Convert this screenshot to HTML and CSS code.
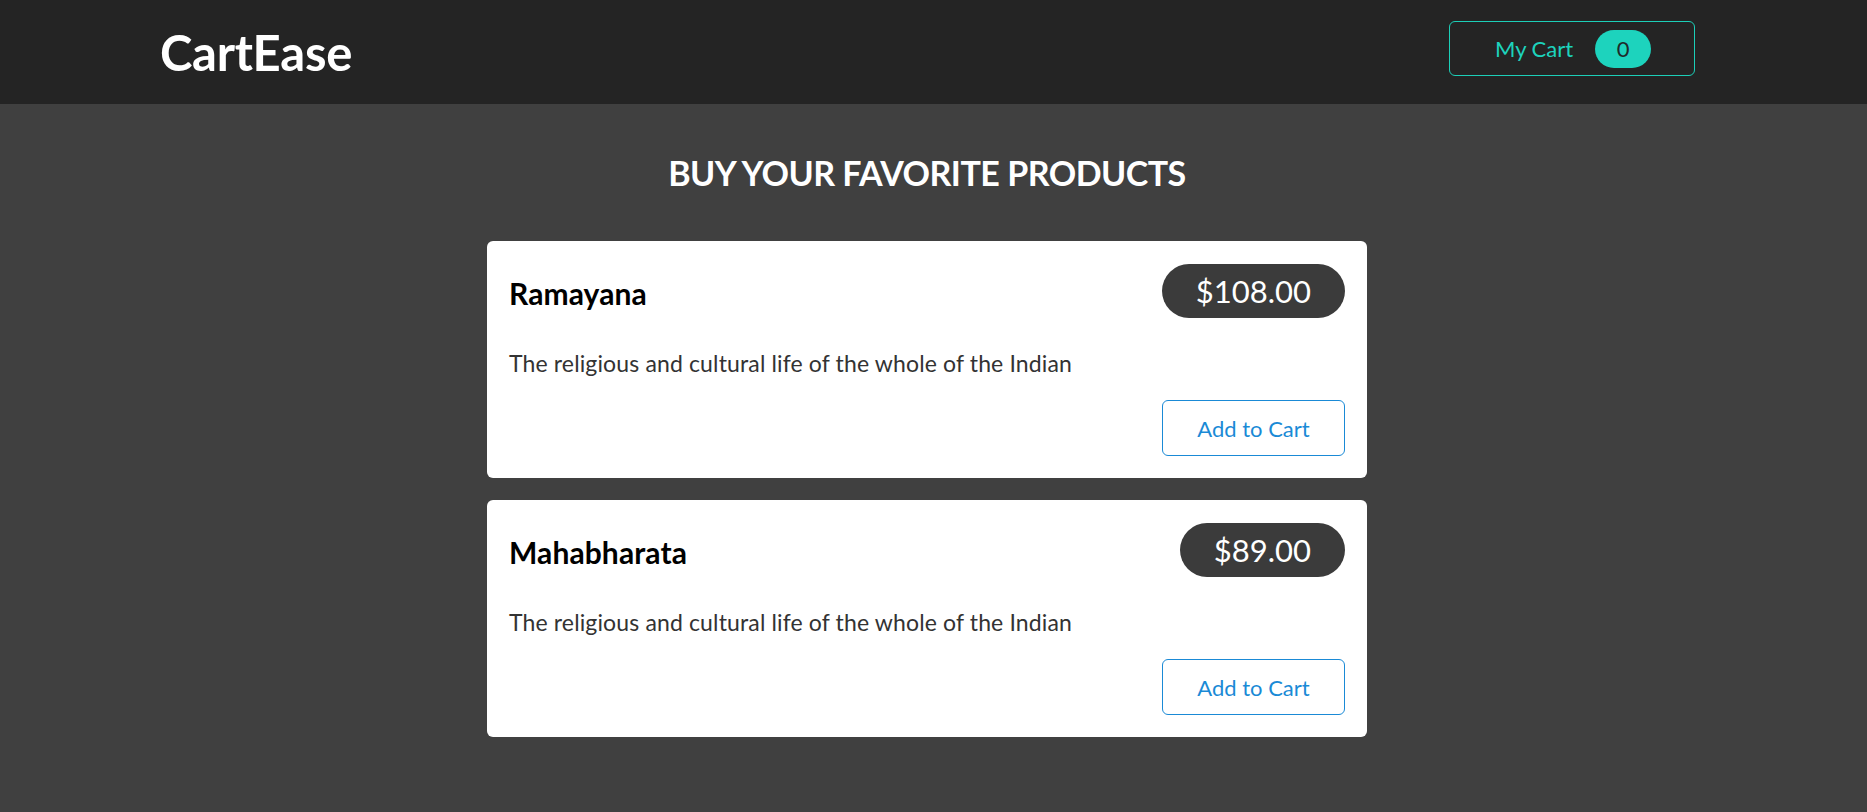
FILE: index.html
```html
<!DOCTYPE html>
<html lang="en">
<head>
<meta charset="utf-8">
<title>CartEase</title>
<link rel="stylesheet" href="styles.css">
</head>
<body>
<header class="topbar">
  <div class="topbar-inner">
    <div class="logo">CartEase</div>
    <button class="cart-btn" type="button">
      <span class="cart-label">My Cart</span>
      <span class="cart-count">0</span>
    </button>
  </div>
</header>
<main class="content">
  <h1 class="page-title">BUY YOUR FAVORITE PRODUCTS</h1>
  <ul class="product-list">
    <li class="product-card">
      <div class="product-head">
        <h2 class="product-name">Ramayana</h2>
        <span class="product-price">$108.00</span>
      </div>
      <p class="product-desc">The religious and cultural life of the whole of the Indian</p>
      <div class="product-actions">
        <button class="add-btn" type="button">Add to Cart</button>
      </div>
    </li>
    <li class="product-card">
      <div class="product-head">
        <h2 class="product-name">Mahabharata</h2>
        <span class="product-price">$89.00</span>
      </div>
      <p class="product-desc">The religious and cultural life of the whole of the Indian</p>
      <div class="product-actions">
        <button class="add-btn" type="button">Add to Cart</button>
      </div>
    </li>
  </ul>
</main>
</body>
</html>
```

FILE: styles.css
```css
* { box-sizing: border-box; }

html, body {
  margin: 0;
  padding: 0;
}

body {
  background: #404040;
  font-family: "Lato", "Noto Sans", sans-serif;
  color: #333;
  min-height: 812px;
}

.topbar {
  background: #242424;
}

.topbar-inner {
  height: 104px;
  display: flex;
  align-items: center;
  justify-content: space-between;
  padding: 0 172px 0 160px;
}

.logo {
  color: #fff;
  font-size: 49px;
  font-weight: 700;
  line-height: 1;
  letter-spacing: -0.3px;
  margin-top: 1px;
}

.cart-btn {
  display: flex;
  align-items: center;
  gap: 22px;
  height: 55px;
  width: 246px;
  margin-bottom: 7px;
  padding: 0 0 0 45px;
  background: transparent;
  border: 1px solid #1ccfb8;
  border-radius: 6px;
  font-family: inherit;
  cursor: pointer;
}

.cart-label {
  color: #1dd3bd;
  font-size: 22px;
  line-height: 1;
}

.cart-count {
  display: flex;
  align-items: center;
  justify-content: center;
  width: 56px;
  height: 38px;
  border-radius: 19px;
  background: #1dd3bd;
  color: #1f2a2a;
  font-size: 22px;
}

.content {
  display: flex;
  flex-direction: column;
  align-items: center;
  padding: 0 13px 40px 0;
}

.page-title {
  margin: 48px 0 48px;
  color: #fff;
  font-size: 34px;
  font-weight: 700;
  line-height: 41px;
  letter-spacing: -0.5px;
}

.product-list {
  list-style: none;
  margin: 0;
  padding: 0;
  width: 880px;
  display: flex;
  flex-direction: column;
  gap: 22px;
}

.product-card {
  background: #fff;
  border-radius: 6px;
  padding: 23px 22px 22px 22px;
  display: flex;
  flex-direction: column;
}

.product-head {
  display: flex;
  align-items: center;
  justify-content: space-between;
  height: 54px;
}

.product-name {
  margin: 4px 0 0 0;
  color: #000;
  font-size: 30px;
  font-weight: 700;
  line-height: 1;
  letter-spacing: 0.1px;
}

.product-price {
  display: flex;
  align-items: center;
  height: 54px;
  padding: 0 34px;
  border-radius: 27px;
  background: #3b3b3b;
  color: #fff;
  font-size: 31px;
  line-height: 1;
}

.product-desc {
  margin: 30px 0 22px;
  font-size: 23px;
  line-height: 30px;
  letter-spacing: 0.14px;
  color: #333;
}

.product-actions {
  display: flex;
  justify-content: flex-end;
}

.add-btn {
  height: 56px;
  width: 183px;
  padding: 0;
  background: #fff;
  border: 1px solid #1a8ad6;
  border-radius: 6px;
  color: #1a8ad6;
  font-family: inherit;
  font-size: 22px;
  cursor: pointer;
}
```
